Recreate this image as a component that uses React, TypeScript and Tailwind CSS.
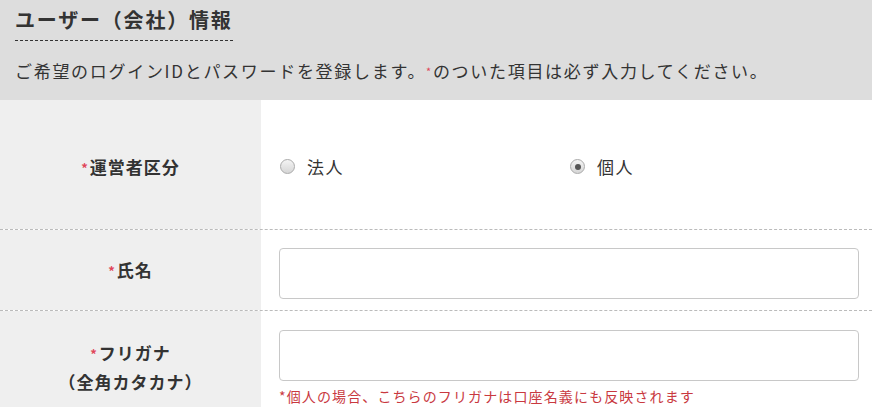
import React from "react";

const Req = () => <span className="text-[#e0475a] text-[13px] align-top relative top-[1px] mr-[1px]">*</span>;

function Radio({ checked }: { checked?: boolean }) {
  return (
    <span className="w-[15px] h-[15px] rounded-full border border-[#aaa] bg-gradient-to-b from-[#f4f4f4] to-[#d6d6d6] flex items-center justify-center shrink-0">
      {checked && <span className="w-[6px] h-[6px] rounded-full bg-[#555]" />}
    </span>
  );
}

export default function App() {
  return (
    <div
      className="w-[872px] h-[407px] overflow-hidden bg-white text-[#333] tracking-[0.1em]"
      style={{ fontFamily: '"Noto Sans CJK JP", "Noto Sans", sans-serif' }}
    >
      {/* Header */}
      <div className="bg-[#dddddd] h-[100px] px-[15px] pt-[5px]">
        <div className="inline-block text-[20px] font-bold leading-[30px] pb-[5px] border-b border-dashed border-[#333] tracking-[0.09em]">
          ユーザー（会社）情報
        </div>
        <p className="text-[17px] leading-[24px] mt-[18px] tracking-[0.1em]">
          ご希望のログインIDとパスワードを登録します。<span className="text-[#e0475a] text-[11px] align-top">*</span>のついた項目は必ず入力してください。
        </p>
      </div>

      {/* Row 1 */}
      <div className="flex h-[130px] border-b border-dashed border-[#bbb]">
        <div className="w-[261px] bg-[#efefef] flex items-center justify-center font-bold text-[17px] tracking-[0.06em] pt-[4px]">
          <Req />運営者区分
        </div>
        <div className="flex-1 flex items-center pt-[4px]">
          <label className="flex items-center gap-[12px] ml-[19px] w-[290px] text-[17px]">
            <Radio /> 法人
          </label>
          <label className="flex items-center gap-[12px] text-[17px]">
            <Radio checked /> 個人
          </label>
        </div>
      </div>

      {/* Row 2 */}
      <div className="flex h-[81px] border-b border-dashed border-[#bbb]">
        <div className="w-[261px] bg-[#efefef] flex items-center justify-center font-bold text-[17px] tracking-[0.06em]">
          <Req />氏名
        </div>
        <div className="flex-1 pt-[18px] pl-[18px] pr-[13px]">
          <input className="w-full h-[51px] rounded-[4px] border border-[#c8c8c8] bg-white outline-none px-3" />
        </div>
      </div>

      {/* Row 3 */}
      <div className="flex h-[120px]">
        <div className="w-[261px] bg-[#efefef] flex flex-col items-center pt-[27px] font-bold text-[17px] leading-[29px] tracking-[0.06em]">
          <div><Req />フリガナ</div>
          <div>（全角カタカナ）</div>
        </div>
        <div className="flex-1 pt-[19px] pl-[18px] pr-[13px]">
          <input className="w-full h-[51px] rounded-[4px] border border-[#c8c8c8] bg-white outline-none px-3" />
          <p className="text-[14px] text-[#c9393f] leading-[20px] mt-[5px] tracking-[0.08em]">
            *個人の場合、こちらのフリガナは口座名義にも反映されます
          </p>
        </div>
      </div>
    </div>
  );
}
